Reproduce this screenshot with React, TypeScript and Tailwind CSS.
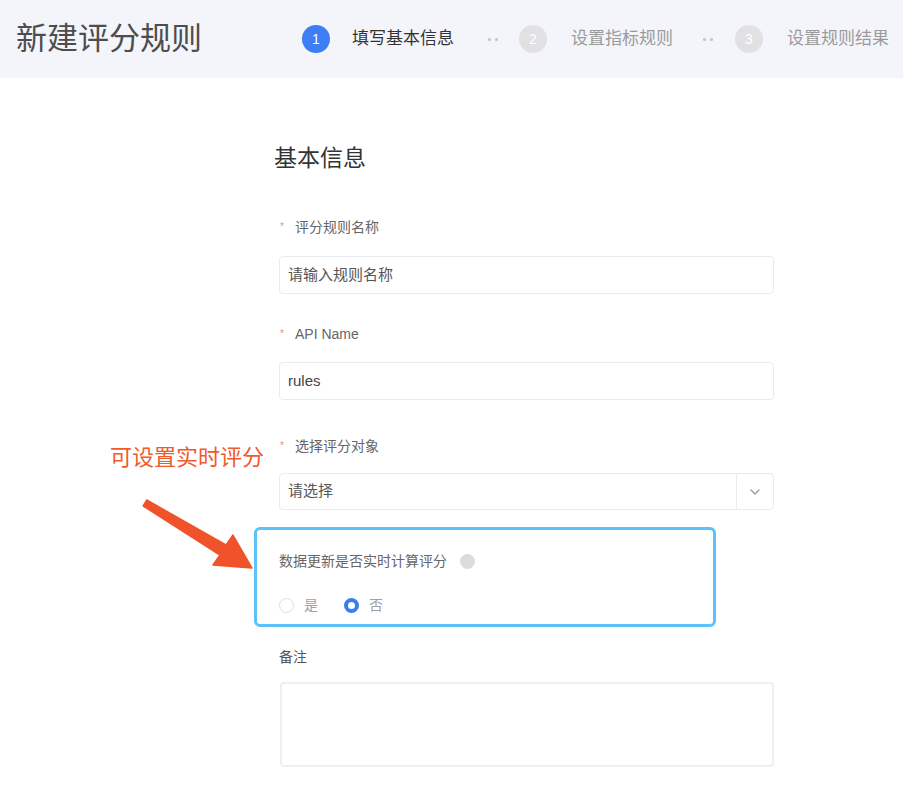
import { ChevronDown } from "lucide-react";

type Step = { index: number; title: string; active: boolean };

const steps: Step[] = [
  { index: 1, title: "填写基本信息", active: true },
  { index: 2, title: "设置指标规则", active: false },
  { index: 3, title: "设置规则结果", active: false },
];

function StepDots() {
  return (
    <div className="flex items-center gap-[4px]">
      <span className="h-[3px] w-[3px] rounded-full bg-[#b7c3da]" />
      <span className="h-[3px] w-[3px] rounded-full bg-[#b7c3da]" />
    </div>
  );
}

function StepItem({ step }: { step: Step }) {
  return (
    <div className="flex items-center">
      <span
        className={
          step.active
            ? "flex h-[28px] w-[28px] items-center justify-center rounded-full bg-[#3e7ef4] text-[14px] text-white"
            : "flex h-[28px] w-[28px] items-center justify-center rounded-full bg-[#e1e1e3] text-[14px] text-white"
        }
      >
        {step.index}
      </span>
      <span
        className={
          step.active
            ? "ml-[22px] w-[103px] whitespace-nowrap text-[17px] leading-[24px] text-[#333]"
            : "ml-[24px] w-[103px] whitespace-nowrap text-[17px] leading-[24px] text-[#9a9a9a]"
        }
      >
        {step.title}
      </span>
    </div>
  );
}

function FieldLabel({ text, required }: { text: string; required?: boolean }) {
  return (
    <div className="flex h-[20px] items-center text-[14px] leading-[20px] text-[#666]">
      {required && <span className="w-[17px] pl-[2px] text-[10px] text-[#f08a8a]">*</span>}
      <span>{text}</span>
    </div>
  );
}

function TextBox({ value, placeholder }: { value?: string; placeholder?: string }) {
  return (
    <div className="flex h-[38px] w-[495px] items-center rounded-[4px] border border-[#ebebef] bg-white px-[8px] text-[15px]">
      {value ? <span className="text-[#444]">{value}</span> : <span className="text-[#555]">{placeholder}</span>}
    </div>
  );
}

function Radio({ label, checked }: { label: string; checked?: boolean }) {
  return (
    <label className="flex items-center">
      {checked ? (
        <span className="h-[15px] w-[15px] rounded-full border-[4px] border-[#3d7cf0] bg-white" />
      ) : (
        <span className="h-[15px] w-[15px] rounded-full border border-[#dedede] bg-white" />
      )}
      <span className="ml-[10px] text-[14px] leading-[20px] text-[#a0a0a0]">{label}</span>
    </label>
  );
}

export default function App() {
  return (
    <div className="relative h-[792px] w-[912px] overflow-hidden bg-white font-['Liberation_Sans','Noto_Sans_CJK_SC',sans-serif]">
      <header className="flex h-[78px] w-[903px] items-center bg-[#f4f5fa]">
        <h1 className="w-[302px] pl-[16px] text-[31px] leading-[40px] text-[#4d4d4d]">新建评分规则</h1>
        <StepItem step={steps[0]} />
        <div className="ml-[33px] mr-[21px]">
          <StepDots />
        </div>
        <StepItem step={steps[1]} />
        <div className="ml-[29px] mr-[22px]">
          <StepDots />
        </div>
        <StepItem step={steps[2]} />
      </header>

      <main className="ml-[274px] flex w-[500px] flex-col">
        <h2 className="mt-[65px] text-[23px] leading-[30px] text-[#333]">基本信息</h2>

        <div className="mt-[44px] pl-[4px]">
          <FieldLabel text="评分规则名称" required />
          <div className="mt-[19px] ml-[1px]">
            <TextBox placeholder="请输入规则名称" />
          </div>
        </div>

        <div className="mt-[30px] pl-[4px]">
          <FieldLabel text="API Name" required />
          <div className="mt-[18px] ml-[1px]">
            <TextBox value="rules" />
          </div>
        </div>

        <div className="mt-[36px] pl-[4px]">
          <FieldLabel text="选择评分对象" required />
          <div className="mt-[17px] ml-[1px] flex h-[37px] w-[495px] items-center rounded-[4px] border border-[#ebebef] bg-white">
            <span className="flex-1 px-[8px] text-[15px] text-[#555]">请选择</span>
            <span className="flex h-full w-[37px] items-center justify-center border-l border-[#ebebef]">
              <ChevronDown className="h-[16px] w-[16px] text-[#9a9aa2]" strokeWidth={2} />
            </span>
          </div>
        </div>

        <div className="mt-[17px] -ml-[20px] h-[100px] w-[462px] rounded-[6px] border-[3px] border-[#5cc2f7] pl-[22px] pt-[21px]">
          <div className="flex items-center text-[14px] leading-[20px] text-[#666]">
            <span>数据更新是否实时计算评分</span>
            <span className="ml-[13px] h-[15px] w-[15px] rounded-full bg-[#dcdcdc]" />
          </div>
          <div className="mt-[24px] flex items-center gap-[26px]">
            <Radio label="是" />
            <Radio label="否" checked />
          </div>
        </div>

        <div className="mt-[20px] pl-[5px] text-[14px] leading-[20px] text-[#555]">备注</div>
        <div className="mt-[15px] ml-[6px] h-[85px] w-[494px] rounded-[4px] border-2 border-[#efeff1] bg-white" />
      </main>

      <div className="absolute left-[110px] top-[444px] text-[22px] leading-[28px] text-[#f15a2b]">可设置实时评分</div>
      <svg className="pointer-events-none absolute left-0 top-0" width="912" height="792" viewBox="0 0 912 792">
        <polygon
          points="146.8,500 226,545 233,535 252,568 213,565 220,555 143.2,506"
          fill="#f0532a"
          stroke="#f0532a"
          strokeWidth="1.5"
          strokeLinejoin="round"
        />
      </svg>
    </div>
  );
}
